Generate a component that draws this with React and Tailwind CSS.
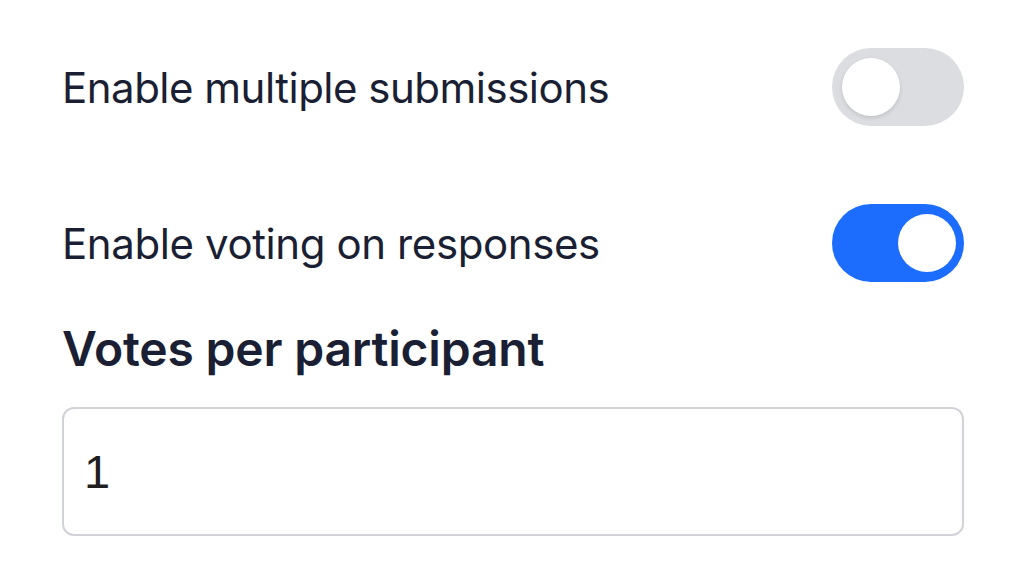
import { useState } from 'react';

const Toggle = ({ on, onChange }) => (
  <button
    onClick={() => onChange(!on)}
    className={`flex items-center w-[132px] h-[78px] rounded-full px-[10px] shrink-0 ${
      on ? 'bg-[#1c6dfd] justify-end pr-[8px]' : 'bg-[#dcdde1] justify-start'
    }`}
  >
    <span
      className={`block w-[58px] h-[58px] rounded-full bg-white ${
        on ? '' : 'shadow-[0_2px_4px_rgba(0,0,0,0.12)]'
      }`}
    />
  </button>
);

const App = () => {
  const [multiple, setMultiple] = useState(false);
  const [voting, setVoting] = useState(true);
  const [votes, setVotes] = useState('1');

  return (
    <div className="min-h-screen bg-white font-['Inter',sans-serif] text-[#1b1f33]">
      <div className="w-[964px] pl-[62px] pt-[48px]">
        {/* Multiple submissions */}
        <div className="flex justify-between items-center h-[78px]">
          <span className="text-[42px] tracking-[-0.5px]">Enable multiple submissions</span>
          <Toggle on={multiple} onChange={setMultiple} />
        </div>

        {/* Voting */}
        <div className="flex justify-between items-center h-[78px] mt-[78px]">
          <span className="text-[42px] tracking-[-0.4px]">Enable voting on responses</span>
          <Toggle on={voting} onChange={setVoting} />
        </div>

        <h3 className="mt-[37px] text-[48px] leading-[60px] font-semibold tracking-[-0.2px]">
          Votes per participant
        </h3>

        <input
          value={votes}
          onChange={(e) => setVotes(e.target.value)}
          className="mt-[28px] w-full h-[129px] rounded-[12px] border-2 border-[#d2d3d9] px-[20px] text-[47px] text-[#1f1f1f] font-['Liberation_Sans',sans-serif] outline-none"
        />
      </div>
    </div>
  );
};

export default App;
